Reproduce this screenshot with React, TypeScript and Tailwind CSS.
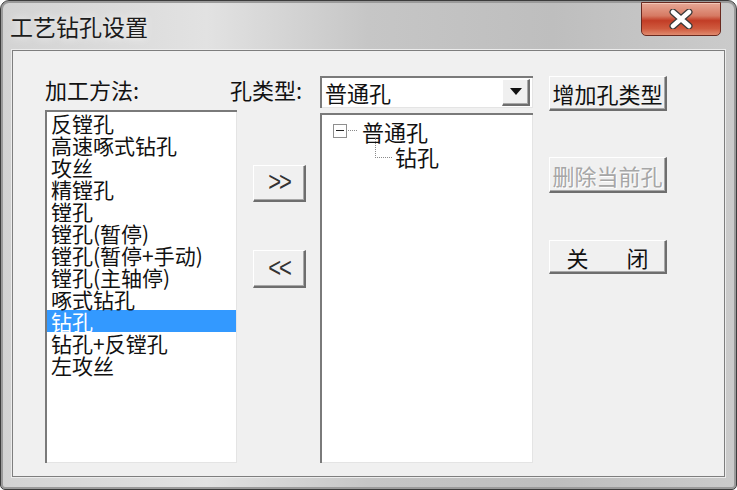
import React from "react";

const listItems = [
  "反镗孔",
  "高速啄式钻孔",
  "攻丝",
  "精镗孔",
  "镗孔",
  "镗孔(暂停)",
  "镗孔(暂停+手动)",
  "镗孔(主轴停)",
  "啄式钻孔",
  "钻孔",
  "钻孔+反镗孔",
  "左攻丝",
];

const sunken = "bg-white shadow-[inset_2px_2px_0_#7a7a7a,inset_-1px_-1px_0_#e4e4e4]";
const raised =
  "bg-[#f0f0f0] border-t border-l border-white border-r-2 border-b-2 border-r-[#6e6e6e] border-b-[#6e6e6e] shadow-[inset_-1px_-1px_0_#a8a8a8]";

function Button({ children, className = "", disabled = false }: { children: React.ReactNode; className?: string; disabled?: boolean }) {
  return (
    <div
      className={`${raised} flex items-center justify-center text-[22px] leading-none ${
        disabled ? "text-[#a6a6a6] [text-shadow:1px_1px_0_#ffffff]" : "text-[#111]"
      } ${className}`}
    >
      {children}
    </div>
  );
}

export default function App() {
  const selected = 9;

  return (
    <div className="w-[737px] h-[490px] bg-white font-['Noto_Sans_CJK_SC',sans-serif]">
      <div className="w-[737px] h-[490px] flex flex-col border border-[#3c3c3c] rounded-t-[9px] rounded-b-[5px] overflow-hidden bg-[linear-gradient(90deg,#d3d3d3_0%,#e2e2e2_28%,#c6c6c6_50%,#bebebe_75%,#cbcbcb_100%)] shadow-[inset_0_0_0_2px_#9a9a9a]">
        {/* title bar */}
        <div className="h-[49px] flex justify-between">
          <div className="pl-[9px] pt-[10px] text-[23px] leading-[30px] text-[#1c1c1c] [text-shadow:0_0_8px_#ffffff]">
            工艺钻孔设置
          </div>
          <div className="mr-[15px] mt-[1px] w-[80px] h-[34px] rounded-b-[5px] border border-[#6a2a20] bg-[linear-gradient(180deg,#e7a896_0%,#d67a63_40%,#c23d26_55%,#cf5a3e_80%,#e08a6e_100%)] flex items-center justify-center shadow-[inset_0_1px_0_#f3c8b8]">
            <svg width="26" height="20" viewBox="0 0 26 20">
              <path d="M5 3 L21 17 M21 3 L5 17" stroke="#3a3a3a" strokeWidth="7" strokeLinecap="round" />
              <path d="M5 3 L21 17 M21 3 L5 17" stroke="#ffffff" strokeWidth="4.5" strokeLinecap="round" />
            </svg>
          </div>
        </div>

        {/* client area */}
        <div className="ml-[11px] w-[713px] h-[427px] bg-[#f0f0f0] border border-[#7e7e7e] shadow-[0_0_0_1px_#ececec] pl-[32px] pt-[25px]">
          {/* row 1 */}
          <div className="flex items-start h-[34px]">
            <div className="w-[185px] pt-[1px] text-[22px] leading-[24px] text-[#111]">加工方法:</div>
            <div className="w-[90px] pt-[1px] text-[22px] leading-[24px] text-[#111]">孔类型:</div>
            <div className={`${sunken} w-[213px] h-[32px] flex items-center pl-[5px] pr-[3px]`}>
              <div className="flex-1 text-[22px] leading-none text-[#111]">普通孔</div>
              <div className={`${raised} w-[28px] h-[27px] flex items-center justify-center`}>
                <svg width="12" height="7" viewBox="0 0 12 7">
                  <path d="M0 0 H12 L6 7 Z" fill="#111" />
                </svg>
              </div>
            </div>
            <Button className="ml-[16px] w-[118px] h-[35px]">增加孔类型</Button>
          </div>

          {/* row 2 */}
          <div className="flex items-start">
            <div className={`${sunken} w-[192px] h-[353px] pt-[2px] pl-[2px] pr-[1px]`}>
              {listItems.map((item, i) => (
                <div
                  key={item}
                  className={`h-[22px] pl-[4px] text-[21px] leading-[22px] whitespace-nowrap ${
                    i === selected ? "bg-[#3399ff] text-white" : "text-[#111]"
                  }`}
                >
                  {item}
                </div>
              ))}
            </div>

            <div className="ml-[16px] w-[53px] flex flex-col">
              <Button className="mt-[55px] h-[37px] text-[#333]">
                <span className="text-[22px] font-['Liberation_Sans',sans-serif] tracking-[-2px] -mt-[2px] scale-y-125">&gt;&gt;</span>
              </Button>
              <Button className="mt-[48px] h-[38px] text-[#333]">
                <span className="text-[22px] font-['Liberation_Sans',sans-serif] tracking-[-2px] -mt-[2px] scale-y-125">&lt;&lt;</span>
              </Button>
            </div>

            <div className={`${sunken} ml-[14px] mt-[3px] w-[213px] h-[350px] pt-[5px] pl-[2px]`}>
              <div className="flex items-center h-[25px] pl-[11px]">
                <div className="w-[14px] h-[14px] border border-[#8f8f8f] bg-white flex items-center justify-center">
                  <div className="w-[8px] h-[1px] bg-[#222]" />
                </div>
                <div className="w-[9px] ml-[1px] border-t border-dotted border-[#8a8a8a]" />
                <div className="ml-[5px] text-[22px] leading-none text-[#111]">普通孔</div>
              </div>
              <div className="flex items-start h-[25px] pl-[53px]">
                <div className="w-[17px] h-[20px] -mt-[5px] border-l border-b border-dotted border-[#8a8a8a]" />
                <div className="ml-[3px] h-[25px] flex items-center text-[22px] leading-none text-[#111]">钻孔</div>
              </div>
            </div>

            <div className="ml-[16px] w-[118px] flex flex-col">
              <Button disabled className="mt-[47px] h-[36px]">删除当前孔</Button>
              <Button className="mt-[47px] h-[34px] gap-[38px]">
                <span>关</span>
                <span>闭</span>
              </Button>
            </div>
          </div>
        </div>
      </div>
    </div>
  );
}
